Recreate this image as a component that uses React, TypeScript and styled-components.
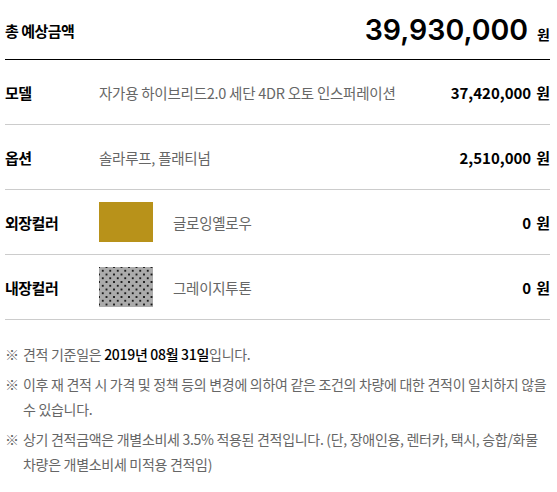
import React from "react";
import styled, { createGlobalStyle } from "styled-components";

const Global = createGlobalStyle`
  html, body { margin: 0; padding: 0; background: #fff; }
  body { font-family: "Noto Sans CJK KR", "Noto Sans", sans-serif; color: #000; }
`;

const Page = styled.div`
  width: 545px;
  padding-left: 5px;
`;

const Header = styled.div`
  height: 59px;
  display: flex;
  align-items: center;
  justify-content: space-between;
  border-bottom: 1px solid #000;
`;

const HeaderLabel = styled.div`
  font-size: 15px;
  font-weight: 700;
  letter-spacing: -0.5px;
  padding-top: 2px;
`;

const Total = styled.div`
  display: flex;
  align-items: baseline;
  gap: 9px;
`;

const TotalNumber = styled.span`
  font-family: Inter, "Noto Sans", sans-serif;
  font-size: 28.5px;
  font-weight: 600;
  letter-spacing: 0px;
`;

const Won = styled.span<{ $size?: number }>`
  font-size: ${(p) => p.$size ?? 15}px;
  font-weight: 700;
`;

const Row = styled.div`
  height: 64px;
  display: flex;
  align-items: center;
  border-bottom: 1px solid #ccc;
`;

const Label = styled.div`
  width: 94px;
  flex-shrink: 0;
  font-size: 15px;
  font-weight: 700;
  letter-spacing: -0.5px;
`;

const Desc = styled.div`
  flex: 1;
  display: flex;
  align-items: center;
  gap: 20px;
  font-size: 14.5px;
  color: #666;
  letter-spacing: -0.25px;
`;

const Swatch = styled.div<{ $kind: "gold" | "dots" }>`
  width: 54px;
  height: 40px;
  flex-shrink: 0;
  ${(p) =>
    p.$kind === "gold"
      ? `background: #b8921a;`
      : `background-color: #ababab;
         background-image:
           radial-gradient(circle, #1a1a1a 0.9px, transparent 1.3px),
           radial-gradient(circle, #1a1a1a 0.9px, transparent 1.3px);
         background-size: 7.5px 7.5px;
         background-position: 0 0, 3.75px 3.75px;`}
`;

const Price = styled.div`
  font-size: 15px;
  font-weight: 700;
  display: flex;
  gap: 5px;
  align-items: baseline;
`;

const Notes = styled.div`
  padding-top: 22px;
  display: flex;
  flex-direction: column;
  gap: 5px;
`;

const Note = styled.div`
  display: flex;
  font-size: 14px;
  line-height: 25px;
  color: #666;
  letter-spacing: -0.3px;
`;

const Mark = styled.span`
  width: 18px;
  flex-shrink: 0;
`;

const NoteText = styled.span`
  flex: 1;
`;

const Strong = styled.span`
  color: #000;
  font-weight: 500;
`;

const rows = [
  { label: "모델", desc: "자가용 하이브리드2.0 세단 4DR 오토 인스퍼레이션", price: "37,420,000" },
  { label: "옵션", desc: "솔라루프, 플래티넘", price: "2,510,000" },
];

export default function App() {
  return (
    <Page>
      <Global />
      <Header>
        <HeaderLabel>총 예상금액</HeaderLabel>
        <Total>
          <TotalNumber>39,930,000</TotalNumber>
          <Won $size={14}>원</Won>
        </Total>
      </Header>
      {rows.map((r) => (
        <Row key={r.label}>
          <Label>{r.label}</Label>
          <Desc>{r.desc}</Desc>
          <Price>
            {r.price}
            <span>원</span>
          </Price>
        </Row>
      ))}
      <Row>
        <Label>외장컬러</Label>
        <Desc>
          <Swatch $kind="gold" />
          글로잉옐로우
        </Desc>
        <Price>
          0<span>원</span>
        </Price>
      </Row>
      <Row>
        <Label>내장컬러</Label>
        <Desc>
          <Swatch $kind="dots" />
          그레이지투톤
        </Desc>
        <Price>
          0<span>원</span>
        </Price>
      </Row>
      <Notes>
        <Note>
          <Mark>※</Mark>
          <NoteText>
            견적 기준일은 <Strong>2019년 08월 31일</Strong>입니다.
          </NoteText>
        </Note>
        <Note>
          <Mark>※</Mark>
          <NoteText>
            이후 재 견적 시 가격 및 정책 등의 변경에 의하여 같은 조건의 차량에 대한 견적이 일치하지 않을
            <br />수 있습니다.
          </NoteText>
        </Note>
        <Note>
          <Mark>※</Mark>
          <NoteText>
            상기 견적금액은 개별소비세 3.5% 적용된 견적입니다. (단, 장애인용, 렌터카, 택시, 승합/화물
            <br />차량은 개별소비세 미적용 견적임)
          </NoteText>
        </Note>
      </Notes>
    </Page>
  );
}
